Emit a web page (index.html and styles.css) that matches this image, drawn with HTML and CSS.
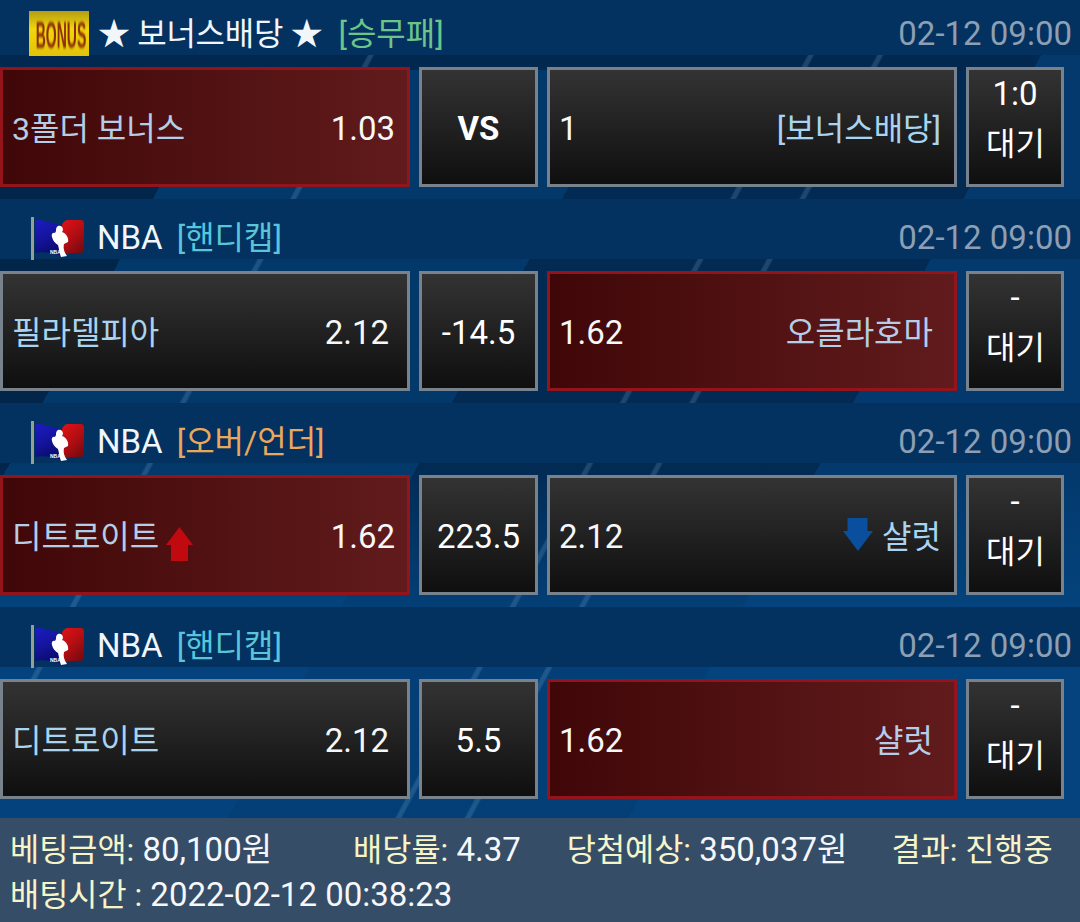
FILE: index.html
```html
<!DOCTYPE html>
<html lang="ko">
<head>
<meta charset="utf-8">
<title>베팅 내역</title>
<link rel="stylesheet" href="styles.css">
</head>
<body>
<svg class="defs" width="0" height="0" aria-hidden="true">
  <defs>
    <linearGradient id="flag-blue" x1="0" y1="0" x2="0.35" y2="1">
      <stop offset="0" stop-color="#1c1cc4"/>
      <stop offset="0.55" stop-color="#14149c"/>
      <stop offset="1" stop-color="#0b0b6e"/>
    </linearGradient>
    <linearGradient id="flag-red" x1="0" y1="0" x2="0.6" y2="1">
      <stop offset="0" stop-color="#e01216"/>
      <stop offset="0.55" stop-color="#b20e12"/>
      <stop offset="1" stop-color="#7c0a10"/>
    </linearGradient>
  </defs>
  <symbol id="nba-flag" viewBox="0 0 56 44">
    <rect x="0" y="0" width="3" height="43" fill="#94a093"/>
    <path d="M4 3C12 2 20 7 31 8V39C22 36 12 34 4 36Z" fill="url(#flag-blue)"/>
    <path d="M31 8C32 5 34 3 37 3L50 3Q53 3 53 7L53 32Q53 36 49 36L40 36Q35 37 31 39Z" fill="url(#flag-red)"/>
    <path d="M27 9C30 8 32 10 32 13L31 15C35 16 38 21 37 25L33 27C32 31 33 35 36 39L30 40C28 35 28 31 27 28C24 26 22 24 21 20C20 17 22 15 24 16L25 14C25 12 25 10 27 9Z" fill="#fff"/>
  </symbol>
</svg>
<main class="page">
  <section class="games">
    <article class="game">
      <header class="head">
        <div class="league">
          <span class="bonus-badge"><span class="bonus-text">BONUS</span></span>
          <span class="name name-bonus">★ 보너스배당 ★</span>
          <span class="tag tag-green">[승무패]</span>
        </div>
        <time class="date">02-12 09:00</time>
      </header>
      <div class="bets">
        <div class="box team picked"><span class="team-name">3폴더 보너스</span><span class="odds">1.03</span></div>
        <div class="box mid vs">VS</div>
        <div class="box team"><span class="odds odds-left">1</span><span class="team-name">[보너스배당]</span></div>
        <div class="box state"><span>1:0</span><span class="state-label">대기</span></div>
      </div>
    </article>

    <article class="game">
      <header class="head">
        <div class="league">
          <svg class="flag" viewBox="0 0 56 44"><use href="#nba-flag"/><text x="19" y="37" class="flag-text">NBA</text></svg>
          <span class="name name-latin">NBA</span>
          <span class="tag tag-cyan">[핸디캡]</span>
        </div>
        <time class="date">02-12 09:00</time>
      </header>
      <div class="bets">
        <div class="box team"><span class="team-name">필라델피아</span><span class="odds odds-in">2.12</span></div>
        <div class="box mid">-14.5</div>
        <div class="box team picked"><span class="odds odds-left">1.62</span><span class="team-name team-in">오클라호마</span></div>
        <div class="box state"><span>-</span><span class="state-label">대기</span></div>
      </div>
    </article>

    <article class="game">
      <header class="head">
        <div class="league">
          <svg class="flag" viewBox="0 0 56 44"><use href="#nba-flag"/><text x="19" y="37" class="flag-text">NBA</text></svg>
          <span class="name name-latin">NBA</span>
          <span class="tag tag-orange">[오버/언더]</span>
        </div>
        <time class="date">02-12 09:00</time>
      </header>
      <div class="bets">
        <div class="box team picked"><span class="team-name">디트로이트<svg class="arrow arrow-up" viewBox="0 0 27 34"><path d="M13.5 0L27 18H22V34H5V18H0Z"/></svg></span><span class="odds">1.62</span></div>
        <div class="box mid">223.5</div>
        <div class="box team"><span class="odds odds-left">2.12</span><span class="team-name"><svg class="arrow arrow-down" viewBox="0 0 30 33"><path d="M4.5 0H24.5V13H30L15 33L0 13H4.5Z"/></svg>샬럿</span></div>
        <div class="box state"><span>-</span><span class="state-label">대기</span></div>
      </div>
    </article>

    <article class="game">
      <header class="head">
        <div class="league">
          <svg class="flag" viewBox="0 0 56 44"><use href="#nba-flag"/><text x="19" y="37" class="flag-text">NBA</text></svg>
          <span class="name name-latin">NBA</span>
          <span class="tag tag-cyan">[핸디캡]</span>
        </div>
        <time class="date">02-12 09:00</time>
      </header>
      <div class="bets">
        <div class="box team"><span class="team-name">디트로이트</span><span class="odds odds-in">2.12</span></div>
        <div class="box mid">5.5</div>
        <div class="box team picked"><span class="odds odds-left">1.62</span><span class="team-name team-in">샬럿</span></div>
        <div class="box state"><span>-</span><span class="state-label">대기</span></div>
      </div>
    </article>
  </section>

  <footer class="summary">
    <div class="summary-row">
      <span class="item"><b>베팅금액:</b> 80,100원</span>
      <span class="item item-rate"><b>배당률:</b> 4.37</span>
      <span class="item"><b>당첨예상:</b> 350,037원</span>
      <span class="item item-result"><b>결과: 진행중</b></span>
    </div>
    <div class="summary-row"><span class="item"><b>배팅시간 :</b> 2022-02-12 00:38:23</span></div>
  </footer>
</main>
</body>
</html>
```
FILE: styles.css
```css
* { box-sizing: border-box; }
html, body { margin: 0; padding: 0; }
body {
  width: 1080px;
  height: 922px;
  overflow: hidden;
  background: #03315f;
  font-family: Roboto, "Noto Sans CJK KR", sans-serif;
  color: #fff;
}
.defs { display: block; height: 0; }
.page {
  width: 1080px;
  height: 922px;
  display: flex;
  flex-direction: column;
  overflow: hidden;
  background:
    linear-gradient(118.4deg,
      transparent 349px, rgba(130,175,215,.22) 351px 354px, transparent 356px,
      transparent 736px, rgba(130,175,215,.22) 738px 741px, transparent 743px,
      transparent 797px, rgba(130,175,215,.22) 799px 802px, transparent 804px),
    linear-gradient(#02284f, #02284f) 0 0 / 1035px 70px no-repeat,
    linear-gradient(180deg, transparent 50%, rgba(4,70,130,.75) 66%),
    linear-gradient(118.4deg, #02254a 0 229px, #03386a 229px 589px, #022a52 589px 942px, #03396c 942px);
}
.games { margin-top: -5px; display: flex; flex-direction: column; }
.game { height: 204px; flex: none; display: flex; flex-direction: column; }
.head {
  height: 60px;
  margin-bottom: 12px;
  padding: 17px 8px 0 28px;
  flex: none;
  display: flex;
  justify-content: space-between;
  align-items: center;
  background: #033160;
}
.league { display: flex; align-items: center; font-size: 32px; line-height: 44px; }
.name { color: #f1f6fb; white-space: nowrap; }
.name-latin { font-size: 33px; }
.name-bonus { letter-spacing: -.3px; margin-right: 2px; }
.tag { margin-left: 14px; white-space: nowrap; }
.tag-green { color: #6dc489; }
.tag-cyan { color: #58c6d8; }
.tag-orange { color: #e9a85c; }
.date { font-size: 33px; color: #8d9fb3; white-space: nowrap; }
.bonus-badge {
  width: 60px;
  height: 45px;
  margin: 0 9px 0 1px;
  padding-left: 4px;
  background: linear-gradient(180deg, #b59d12, #f2d60a 40%, #e2c209);
  display: flex;
  align-items: center;
  justify-content: center;
  overflow: hidden;
  flex: none;
}
.bonus-text {
  display: block;
  font: bold 14px/16px "Liberation Sans", sans-serif;
  color: #8a2c08;
  transform: scaleY(2.7);
  filter: blur(.6px);
  white-space: nowrap;
}
.flag { width: 56px; height: 44px; margin: 2px 10px 0 3px; flex: none; }
.flag-text { font: bold 5px "Liberation Sans", sans-serif; fill: #fff; }
.bets {
  height: 120px;
  flex: none;
  display: grid;
  grid-template-columns: 410px 119px 410px 98px;
  column-gap: 9px;
}
.box {
  border: 3px solid #78828c;
  background: linear-gradient(180deg, #333 0%, #0f0f0f 100%);
  font-size: 33px;
  display: flex;
  align-items: center;
}
.team { justify-content: space-between; padding: 2px 13px 0 9px; }
.picked { border-color: #93141a; background: linear-gradient(90deg, #400708 0%, #611b1c 100%); }
.team-name { color: #a8d4f0; font-size: 32px; white-space: nowrap; display: flex; align-items: center; margin-top: -4px; }
.picked .team-name { color: #b5cee8; }
.odds { color: #f5f7f9; margin-right: -1px; }
.odds-in { margin-right: 5px; }
.odds-left { margin-right: auto; }
.team-in { margin-right: 8px; }
.mid { justify-content: center; padding-top: 2px; }
.vs { font-weight: 700; }
.state {
  flex-direction: column;
  justify-content: flex-start;
  line-height: 50px;
}
.state span:first-child { margin-top: -1px; }
.state-label { font-size: 32px; padding-left: 1px; }
.arrow { flex: none; }
.arrow-up { width: 27px; height: 34px; fill: #c00a0f; margin-left: 7px; transform: translateY(10px); filter: blur(.4px); }
.arrow-down { width: 30px; height: 33px; fill: #0a4f9e; margin-right: 9px; filter: blur(.4px); }
.summary {
  height: 104px;
  margin-top: auto;
  flex: none;
  padding: 9px 0 0 10px;
  background: #364d68;
  font-size: 33px;
  color: #f5f7fa;
}
.summary-row { display: flex; gap: 46px; line-height: 45px; height: 45px; white-space: nowrap; }
.item-rate { margin-left: 35px; }
.item-result { margin-left: -2px; }
.summary b { font-weight: 400; font-size: 31.7px; color: #f7f5c8; }
```
